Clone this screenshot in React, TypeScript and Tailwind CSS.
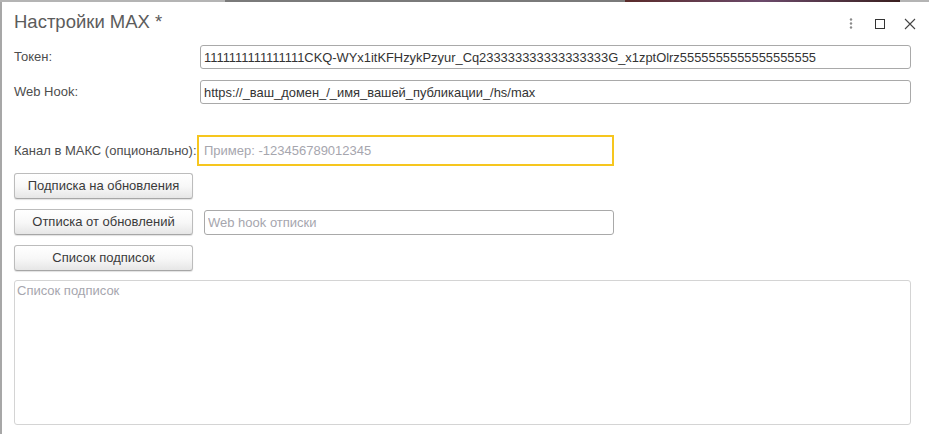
import { useState } from 'react'

const font = { fontFamily: '"Liberation Sans", Arial, sans-serif' }

function FormButton({ children }: { children: React.ReactNode }) {
  return (
    <button className="w-[179px] h-[26px] shrink-0 rounded-[3px] border border-[#bcbcbc] border-b-[#a6a6a6] bg-gradient-to-b from-white via-[#f8f8f8] to-[#e6e6e6] shadow-[0_1px_1px_rgba(0,0,0,0.12)] text-[13px] text-[#3a3a3a]">
      {children}
    </button>
  )
}

export default function App() {
  const [token, setToken] = useState('1111111111111111CKQ-WYx1itKFHzykPzyur_Cq233333333333333333G_x1zptOlrz5555555555555555555')
  const [hook, setHook] = useState('https://_ваш_домен_/_имя_вашей_публикации_/hs/max')

  return (
    <div style={font} className="w-[929px] h-[434px] bg-white overflow-hidden">
      {/* strip of the desktop behind the window */}
      <div className="flex h-[2px]">
        <div className="w-[225px] bg-[#b4b4b4]" />
        <div className="w-[400px] bg-[#7a7a7a]" />
        <div className="w-[275px] bg-gradient-to-r from-[#5a2a2a] via-[#6b4a6b] to-[#3a1f1f]" />
        <div className="flex-1 bg-[#b4b4b4]" />
      </div>

      <div className="h-[432px] border-l-2 border-[#a7a7a7] pl-[12px] pr-[18px]">
        {/* Header */}
        <div className="flex items-center justify-between h-[43px]">
          <h1 className="text-[18.5px] text-[#5c5c5c] leading-none -mt-[2px]">Настройки MAX *</h1>
          <div className="flex items-center -mr-[5px]">
            <svg width="12" height="12" viewBox="0 0 12 12" className="mr-[17px]">
              <circle cx="6" cy="1.5" r="1.2" fill="#8a8a8a" />
              <circle cx="6" cy="5.5" r="1.2" fill="#8a8a8a" />
              <circle cx="6" cy="9.5" r="1.2" fill="#8a8a8a" />
            </svg>
            <svg width="12" height="12" viewBox="0 0 12 12" className="mr-[18px]">
              <rect x="1.5" y="1.5" width="9" height="9" fill="none" stroke="#333" strokeWidth="1" />
            </svg>
            <svg width="12" height="12" viewBox="0 0 12 12">
              <path d="M1 1 L11 11 M11 1 L1 11" stroke="#444" strokeWidth="1.1" />
            </svg>
          </div>
        </div>

        {/* Token / Web Hook */}
        <div className="flex flex-col gap-[11px]">
          <div className="flex items-center">
            <label className="w-[186px] text-[13px] text-[#4d4d4d]">Токен:</label>
            <input
              value={token}
              onChange={(e) => setToken(e.target.value)}
              className="flex-1 h-[24px] px-[3px] rounded-[3px] border border-[#a9a9a9] text-[12.9px] text-[#333] outline-none"
            />
          </div>
          <div className="flex items-center">
            <label className="w-[186px] text-[13px] text-[#4d4d4d]">Web Hook:</label>
            <input
              value={hook}
              onChange={(e) => setHook(e.target.value)}
              className="flex-1 h-[24px] px-[3px] rounded-[3px] border border-[#a9a9a9] text-[12.9px] text-[#333] outline-none"
            />
          </div>
        </div>

        {/* Channel */}
        <div className="flex items-center mt-[31px]">
          <label className="w-[183px] text-[13px] text-[#4d4d4d] whitespace-nowrap">Канал в МАКС (опционально):</label>
          <input
            placeholder="Пример: -123456789012345"
            className="w-[417px] h-[31px] px-[5px] border-2 border-[#f6c61e] text-[13px] text-[#333] placeholder:text-[#a6a6ae] outline-none"
          />
        </div>

        {/* Subscription buttons */}
        <div className="flex flex-col gap-[10px] mt-[7px]">
          <FormButton>Подписка на обновления</FormButton>
          <div className="flex items-center">
            <FormButton>Отписка от обновлений</FormButton>
            <input
              placeholder="Web hook отписки"
              className="ml-[11px] w-[410px] h-[25px] px-[3px] rounded-[3px] border border-[#a9a9a9] text-[13px] text-[#333] placeholder:text-[#a6a6ae] outline-none"
            />
          </div>
          <FormButton>Список подписок</FormButton>
        </div>

        <textarea
          placeholder="Список подписок"
          className="mt-[9px] w-full h-[145px] px-[2px] py-0 rounded-[3px] border border-[#d4d4d4] text-[13px] text-[#333] placeholder:text-[#a6a6ae] resize-none outline-none block"
        />
      </div>
    </div>
  )
}
